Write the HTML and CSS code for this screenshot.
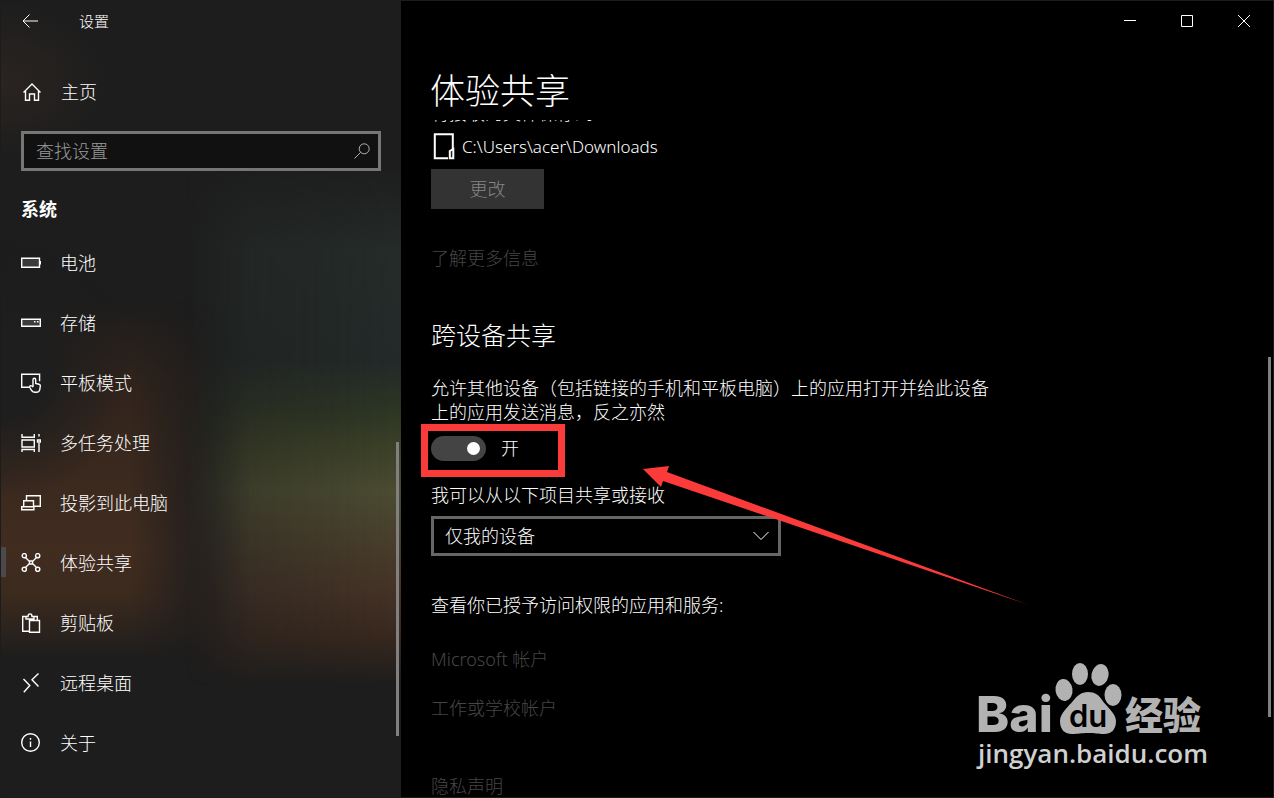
FILE: index.html
```html
<!DOCTYPE html>
<html lang="zh-CN">
<head>
<meta charset="utf-8">
<title>设置</title>
<link rel="stylesheet" href="styles.css">
</head>
<body>
<div class="window">
  <aside class="sidebar">
    <header class="sidebar-top">
      <button class="icon-button" aria-label="返回">
        <svg width="16" height="14" viewBox="0 0 16 14"><path d="M7.500 .5 1 7l6.500 6.500M1 7h15"/></svg>
      </button>
      <span class="app-name">设置</span>
    </header>
    <a class="home" href="#home">
      <svg width="20" height="20" viewBox="0 0 20 20"><path d="M1.500 10.500 10 2l8.500 8.500M3.500 9v9.200h4v-6.200h5v6.200h4V9"/></svg>
      <span>主页</span>
    </a>
    <div class="search">
      <input type="text" placeholder="查找设置" aria-label="查找设置">
      <svg width="16" height="16" viewBox="0 0 16 16"><circle cx="10.200" cy="5.800" r="5"/><path d="M6.600 9.400.5 15.500"/></svg>
    </div>
    <h2 class="group">系统</h2>
    <nav class="nav">
      <a href="#battery"><svg width="20" height="20" viewBox="0 0 20 20"><path class="shade" d="M.7 5.200h17.800v9.100H.7z"/><path d="M19.300 8v3.500"/></svg><span>电池</span></a>
      <a href="#storage"><svg width="20" height="20" viewBox="0 0 20 20"><path class="shade" d="M.7 6.200h18.600v7.100H.7z"/><path d="M13 8.700h1.500M16 8.700h1.500"/></svg><span>存储</span></a>
      <a href="#tablet"><svg width="20" height="20" viewBox="0 0 20 20"><path d="M8.500 14.300H.7V1.300h17.900v7"/><path d="M12 14V6.800c0-2 2.700-2 2.700 0v3.700l3.300.7c1 .2 1.400.8 1.300 1.800l-.5 3.500c-.3 2-1.500 2.800-3.500 2.800h-1.200c-1.600 0-2.600-.5-3.500-1.800L8.800 14.500c-.4-.9 0-1.800.9-1.900.8 0 1.500.5 2.300 1.400"/></svg><span>平板模式</span></a>
      <a href="#multitask"><svg width="20" height="20" viewBox="0 0 20 20"><path d="M1 1v3.300h12.300V1M1 7h12.300v7H1zM1 19v-2.500h12.300V19M18 1v2.500M18 10v9"/><path d="M16.500 7h3v2h-3z"/></svg><span>多任务处理</span></a>
      <a href="#project"><svg width="20" height="20" viewBox="0 0 20 20"><path d="M5.500 7V2.700h13.800v10.600H13M2.700 13.500V7.700h9.800v5.800M.7 13.700h12.200v3H.7z"/></svg><span>投影到此电脑</span></a>
      <a href="#share" class="current" aria-current="page"><svg width="20" height="20" viewBox="0 0 20 20"><path d="m4.500 4.500 4 4M15.500 4.500l-4 4M4.500 14.500l4-4M15.500 14.500l-4-4M8.500 8h3v3h-3z"/><circle cx="3.300" cy="2.700" r="2.100"/><circle cx="16.700" cy="2.700" r="2.100"/><circle cx="3.300" cy="16.300" r="2.100"/><circle cx="16.700" cy="16.300" r="2.100"/></svg><span>体验共享</span></a>
      <a href="#clipboard"><svg width="20" height="20" viewBox="0 0 20 20"><path d="M8 18.300H1.700V3.500H5M13 3.500h3.300V7M5 6V3.500h2c0-3.500 4-3.500 4 0h2V6zM8.500 7.500h10v11.800h-10z"/></svg><span>剪贴板</span></a>
      <a href="#remote"><svg width="20" height="20" viewBox="0 0 20 20"><path d="m2.500 6 6.300 6.500-6 6.800M17.500.5l-6.500 6.300 6.500 6.700"/></svg><span>远程桌面</span></a>
      <a href="#about"><svg width="20" height="20" viewBox="0 0 20 20"><circle cx="9.500" cy="9.500" r="8.800"/><path d="M9.500 8.500v5.500M9.500 5v1.700"/></svg><span>关于</span></a>
    </nav>
    <div class="scrollbar scrollbar-side"></div>
  </aside>

  <main class="main">
    <header class="caption">
      <button class="icon-button" aria-label="最小化"><svg width="13" height="13" viewBox="0 0 13 13"><path d="M0 5.500h12"/></svg></button>
      <button class="icon-button" aria-label="最大化"><svg width="13" height="13" viewBox="0 0 13 13"><path d="M.5.500h11v11H.5z"/></svg></button>
      <button class="icon-button" aria-label="关闭"><svg width="13" height="13" viewBox="0 0 13 13"><path d="m0 0 12 12M12 0 0 12"/></svg></button>
    </header>
    <h1 class="title">体验共享</h1>
    <div class="content">
      <p class="save-label">将接收的文件保存到</p>
      <div class="path">
        <svg width="24" height="27" viewBox="0 0 24 27"><path d="M17 25.200H3.800V1.200h18V16"/><path d="M18.800 25.200V18l3.500-2v9.200z" class="shade"/></svg>
        <span>C:\Users\acer\Downloads</span>
      </div>
      <button class="change">更改</button>
      <a class="link more" href="#more">了解更多信息</a>
      <h2 class="section">跨设备共享</h2>
      <p class="desc" id="desc">允许其他设备（包括链接的手机和平板电脑）上的应用打开并给此设备上的应用发送消息，反之亦然</p>
      <div class="toggle-row">
        <input type="checkbox" role="switch" id="cross" class="switch" aria-describedby="desc" checked>
        <label for="cross">开</label>
        <div class="highlight"></div>
      </div>
      <label class="from" for="from">我可以从以下项目共享或接收</label>
      <div class="select">
        <select id="from"><option>仅我的设备</option></select>
        <svg width="16" height="10" viewBox="0 0 16 10"><path d="m.5 1 7.500 7.500L15.500 1"/></svg>
      </div>
      <p class="granted">查看你已授予访问权限的应用和服务:</p>
      <a class="link ms" href="#ms">Microsoft 帐户</a>
      <a class="link work" href="#work">工作或学校帐户</a>
      <a class="link privacy" href="#privacy">隐私声明</a>
    </div>
    <div class="scrollbar scrollbar-main"></div>
    <svg class="arrow" width="386" height="140" viewBox="0 0 386 140"><path d="M0 3 26 0 24 6 386 139 20 15 18 21z"/></svg>
    <svg class="brand" width="232" height="112" viewBox="0 0 232 112" role="img" aria-label="Baidu 经验">
      <text class="brand-bai" x="-2" y="69">Bai</text>
      <ellipse cx="86" cy="27" rx="8.500" ry="11" transform="rotate(-8 86 27)"/>
      <ellipse cx="102" cy="11" rx="8" ry="11"/>
      <ellipse cx="122" cy="12" rx="8.500" ry="11" transform="rotate(12 122 12)"/>
      <ellipse cx="135" cy="32" rx="8.500" ry="11"/>
      <path d="M110 29c7 0 11 3 14 8s14 13 14 21c0 9-5 13-12 13-6 0-9-1-16-1s-10 1-16 1c-7 0-12-4-12-13 0-8 9-15 13-20s8-9 15-9z"/>
      <text class="brand-du" x="91" y="64">du</text>
      <text class="brand-exp" x="147" y="66">经验</text>
      <text class="brand-url" x="0" y="100">jingyan.baidu.com</text>
    </svg>
  </main>
</div>
</body>
</html>
```
FILE: styles.css
```css
* { box-sizing: border-box; }
body {
  margin: 0;
  background: #000;
  color: #fff;
  font: 300 18px/24px "Noto Sans", "Noto Sans CJK SC", sans-serif;
}
h1, h2, p { margin: 0; font-weight: inherit; }
a { color: inherit; text-decoration: none; }
button, input, select { font: inherit; color: inherit; }
svg { display: block; flex: none; fill: none; stroke: #fff; stroke-width: 1; }

.window {
  display: grid;
  grid-template-columns: 400px 1fr;
  height: 100vh;
  overflow: hidden;
  border: 1px solid #1c1c1c;
}

/* Sidebar: blurred wallpaper glow behind the navigation */
.sidebar {
  position: relative;
  z-index: 0;
  background: radial-gradient(ellipse 110px 80px at 0 80px, #2a2421, transparent), #1d1d1d;
}
.sidebar::before, .sidebar::after {
  content: "";
  position: absolute;
  z-index: -1;
  inset: 0;
}
.sidebar::before {
  background:
    radial-gradient(ellipse 130px 130px at 0 370px, #1e1e1e 35%, transparent),
    linear-gradient(transparent 300px, #32241c 390px, #3a291e 470px, #412c20 550px, #3b2a1e 595px, transparent 660px);
  mask-image: linear-gradient(90deg, #000 130px, transparent 215px);
}
.sidebar::after {
  background: linear-gradient(transparent 160px, #252b29 250px, #232928 360px, #2d3524 410px, #3d4128 450px, #4a4b31 490px, #483e2b 540px, #443226 590px, #38281e 635px, transparent 685px);
  mask-image: linear-gradient(90deg, transparent 185px, #000000b0 250px, #000 390px);
}
.sidebar-top { display: flex; align-items: center; height: 40px; padding-left: 7px; font-size: 15px; }
.icon-button {
  display: grid;
  place-items: center;
  height: 40px;
  padding: 0;
  border: 0;
  background: none;
}
.sidebar-top .icon-button { width: 44px; }
.app-name { padding-left: 27px; }
.home { display: flex; align-items: center; gap: 19px; height: 40px; margin-top: 31px; padding-left: 21px; }
.home svg, .nav svg { stroke-width: 1.4; }
.search {
  position: relative;
  margin: 19px 20px 0;
}
.search input {
  display: block;
  width: 100%;
  height: 40px;
  padding: 0 40px 0 12px;
  border: 3px solid #767676;
  border-radius: 0;
  background: #111;
  outline: 0;
}
.search input::placeholder { color: #9a9a9a; opacity: 1; }
.search svg { position: absolute; right: 11px; top: 12px; stroke: #b0b0b0; }
.group { margin: 26px 0 12px 20px; font-size: 18px; font-weight: 700; }
.nav { display: flex; flex-direction: column; }
.nav a { position: relative; display: flex; align-items: center; gap: 19px; height: 60px; padding-left: 20px; }
.nav .current::before {
  content: "";
  position: absolute;
  left: 0;
  top: 14px;
  width: 5px;
  height: 30px;
  background: #4a4a4a;
}
.shade { fill: #ffffff22; }
.scrollbar { position: absolute; width: 3px; background: #808080; }
.scrollbar-side { right: 2px; top: 441px; height: 294px; }
.scrollbar-main { right: 2px; top: 356px; height: 360px; }

/* Content pane */
.main { position: relative; display: flex; flex-direction: column; min-width: 0; min-height: 0; background: #000; }
.caption { display: flex; justify-content: flex-end; }
.caption .icon-button { width: 57px; }
.title { padding: 26px 0 5px 29px; font-size: 35px; line-height: 48px; }
.content {
  display: flex;
  flex: 1;
  flex-direction: column;
  align-items: flex-start;
  min-height: 0;
  padding: 0 30px;
  overflow: hidden;
}
.content > * { flex: none; }
.save-label { margin-top: -19px; }
.path { display: flex; align-items: center; gap: 7px; height: 27px; margin-top: 8px; font-size: 17px; }
.path svg { stroke-width: 2; }
.change { width: 113px; height: 40px; margin-top: 9px; border: 0; background: #333; color: #858585; }
.link { color: #464646; }
.more { margin-top: 37px; }
.section { margin-top: 49px; font-size: 25px; line-height: 32px; }
.desc { max-width: 568px; margin-top: 25px; }
.toggle-row { position: relative; display: flex; align-items: center; gap: 15px; height: 26px; margin-top: 11px; }
.switch {
  display: grid;
  align-items: center;
  justify-items: end;
  width: 55px;
  height: 25px;
  margin: 0;
  padding-right: 6px;
  border-radius: 13px;
  background: #444;
  appearance: none;
}
.switch::before { content: ""; width: 13px; height: 13px; border-radius: 50%; background: #fff; }
.switch:not(:checked) { justify-items: start; padding: 0 0 0 6px; }
.highlight { position: absolute; left: -10px; top: -11px; width: 144px; height: 53px; border: 7px solid #fb3a3a; }
.from { margin-top: 22px; }
.select { position: relative; width: 350px; margin-top: 9px; }
.select select {
  display: block;
  width: 100%;
  height: 40px;
  padding: 0 40px 0 11px;
  border: 3px solid #666;
  border-radius: 0;
  background: #000;
  appearance: none;
}
.select svg { position: absolute; right: 12px; top: 15px; }
.granted { margin-top: 37px; }
.ms { margin-top: 30px; }
.work { margin-top: 25px; }
.privacy { margin-top: 54px; }

/* Annotation and brand mark over the pane */
.arrow { position: absolute; left: 242px; top: 465px; fill: #fb3a3a; stroke: none; }
.brand { position: absolute; right: 63px; bottom: 22px; fill: #b2b2b2; stroke: none; overflow: visible; }
.brand-bai { font: 800 50px Inter, sans-serif; }
.brand-du { font: 600 31px Inter, sans-serif; fill: #000; }
.brand-exp { font: 900 38px "Noto Sans CJK SC", sans-serif; }
.brand-url { font: 600 26px "Open Sans", sans-serif; fill: #d0d0d0; }
```
